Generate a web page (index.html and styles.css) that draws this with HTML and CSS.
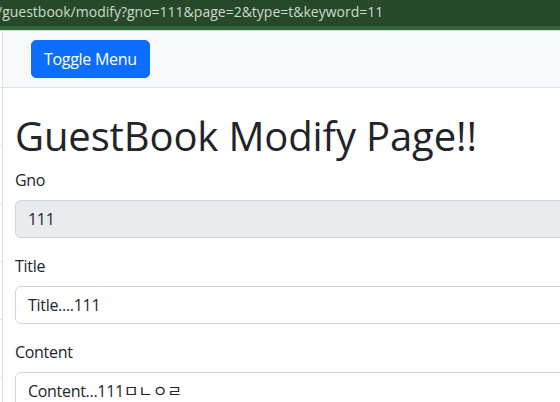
FILE: index.html
```html
<!DOCTYPE html>
<html lang="ko">
<head>
<meta charset="utf-8">
<title>GuestBook Modify Page</title>
<link rel="stylesheet" href="styles.css">
</head>
<body>
<div class="urlbar"><span class="url">/guestbook/modify?gno=111&amp;page=2&amp;type=t&amp;keyword=11</span></div>
<div class="urlstripe"></div>
<div class="chromeline"></div>
<div class="wrapper">
  <aside class="sidebar">
    <div class="sidebar-heading"></div>
    <div class="sidebar-item"></div>
    <div class="sidebar-item"></div>
    <div class="sidebar-item"></div>
    <div class="sidebar-item"></div>
    <div class="sidebar-item"></div>
  </aside>
  <div class="page">
    <nav class="navbar">
      <button class="btn-toggle" type="button">Toggle Menu</button>
    </nav>
    <main class="content">
      <h1 class="title">GuestBook Modify Page!!</h1>
      <form class="form">
        <div class="form-group">
          <label class="form-label">Gno</label>
          <input class="form-control readonly" type="text" value="111" readonly>
        </div>
        <div class="form-group">
          <label class="form-label">Title</label>
          <input class="form-control" type="text" value="Title....111">
        </div>
        <div class="form-group">
          <label class="form-label">Content</label>
          <textarea class="form-control area" rows="5">Content...111ㅁㄴㅇㄹ</textarea>
        </div>
      </form>
    </main>
  </div>
</div>
</body>
</html>
```
FILE: styles.css
```css
html, body {
  margin: 0;
  padding: 0;
  background: #ffffff;
  overflow: hidden;
  width: 560px;
  height: 402px;
}
body {
  font-family: "Open Sans", "Noto Sans CJK KR", sans-serif;
  color: #212529;
}
.urlbar {
  height: 26px;
  background: #264a29;
  overflow: hidden;
  white-space: nowrap;
}
.url {
  display: block;
  margin-left: -3px;
  font-size: 14px;
  line-height: 24px;
  color: #cdd8cc;
}
.urlstripe {
  height: 4px;
  background: #2f6a36;
}
.chromeline {
  height: 1px;
  background: #d5d8dc;
}
.wrapper {
  display: flex;
  width: 900px;
}
.sidebar {
  width: 2px;
  flex: none;
  border-right: 1px solid #dee2e6;
  background: #ffffff;
}
.sidebar-heading {
  height: 56px;
  border-bottom: 1px solid #dee2e6;
}
.sidebar-item {
  height: 57px;
  border-bottom: 1px solid #dee2e6;
}
.page {
  flex: 1;
}
.navbar {
  height: 56px;
  box-sizing: content-box;
  background: #f8f9fa;
  border-bottom: 1px solid #dee2e6;
  display: flex;
  align-items: center;
  padding-left: 28px;
}
.btn-toggle {
  height: 38px;
  padding: 0 12px;
  border: 1px solid #0d6efd;
  border-radius: 5px;
  background: #0d6efd;
  color: #ffffff;
  font-family: "Open Sans", sans-serif;
  font-size: 16px;
  letter-spacing: -0.3px;
}
.content {
  padding: 0 12px;
}
.title {
  margin: 24px 0 8px;
  font-size: 40px;
  font-weight: 400;
  line-height: 48px;
  letter-spacing: -0.13px;
}
.form-group {
  margin-bottom: 16px;
}
.form-label {
  display: block;
  font-size: 16px;
  line-height: 24px;
  margin-bottom: 8px;
  letter-spacing: -0.3px;
}
.form-control {
  display: block;
  box-sizing: border-box;
  width: 100%;
  height: 38px;
  padding: 6px 12px;
  font-family: "Open Sans", "Noto Sans CJK KR", sans-serif;
  font-size: 16px;
  line-height: 24px;
  color: #212529;
  background: #ffffff;
  border: 1px solid #ced4da;
  border-radius: 6px;
  letter-spacing: -0.3px;
}
.readonly {
  background: #e9ecef;
}
.area {
  height: 146px;
  resize: none;
}
```
